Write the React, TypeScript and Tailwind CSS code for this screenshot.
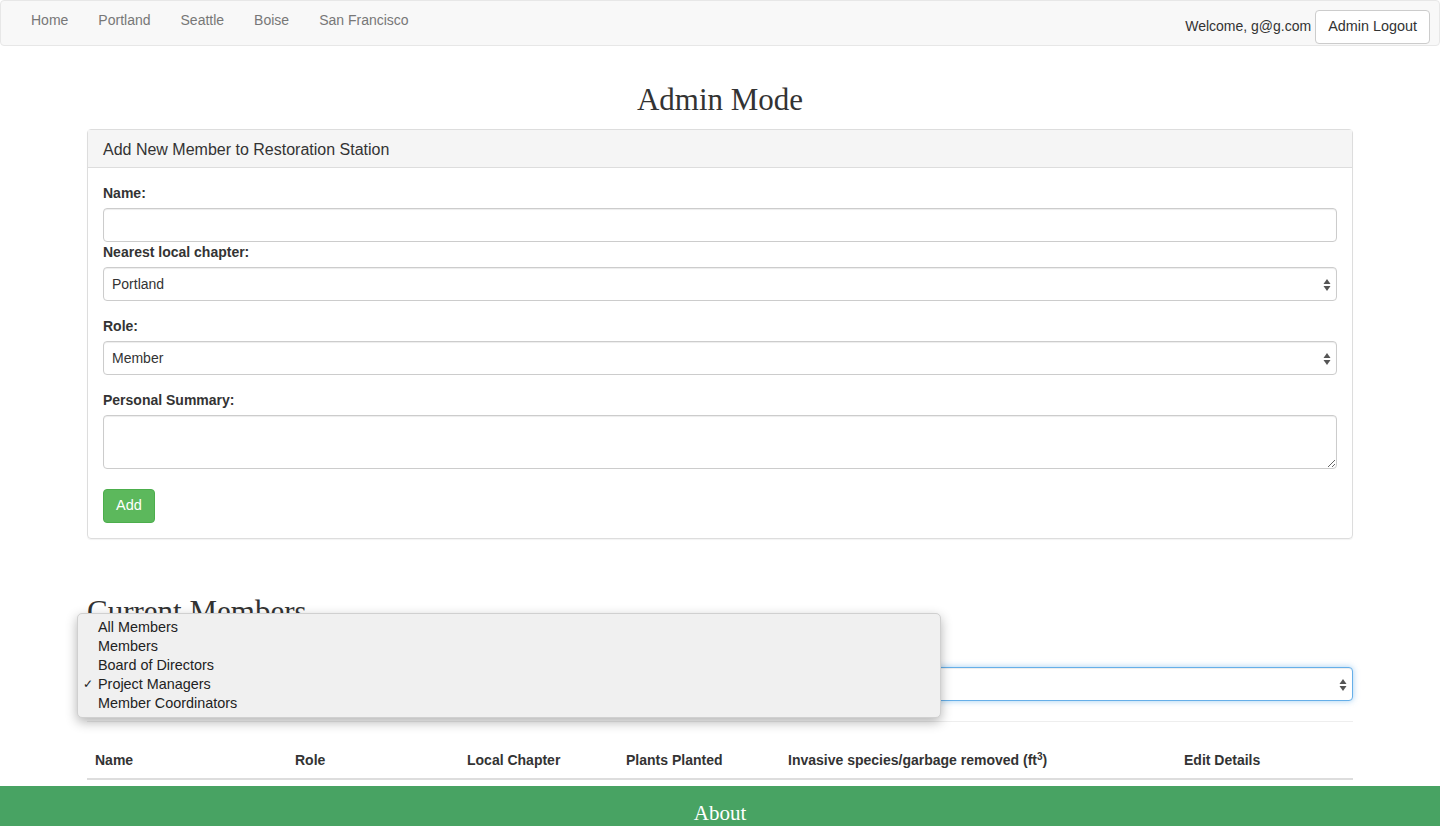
import React from "react";

const sans = "font-['Liberation_Sans','Helvetica_Neue',Arial,sans-serif]";
const serif = "font-['Liberation_Serif','DejaVu_Serif',serif]";

function SelectArrows({ className = "" }: { className?: string }) {
  return (
    <svg className={className} width="8" height="14" viewBox="0 0 8 14" fill="#555">
      <path d="M4 1 L7.5 6 L0.5 6 Z" />
      <path d="M0.5 8 L7.5 8 L4 13 Z" />
    </svg>
  );
}

function FakeSelect({ value, focused = false }: { value: string; focused?: boolean }) {
  return (
    <div
      className={`relative flex h-[34px] items-center rounded-[4px] border bg-white pl-[8px] text-[14px] text-[#333] ${
        focused
          ? "border-[#66afe9] shadow-[inset_0_1px_1px_rgba(0,0,0,0.075),0_0_6px_rgba(102,175,233,0.6)]"
          : "border-[#ccc] shadow-[inset_0_1px_1px_rgba(0,0,0,0.075)]"
      }`}
    >
      <span>{value}</span>
      <SelectArrows className="absolute right-[5px] top-[10px]" />
    </div>
  );
}

const navLinks = ["Home", "Portland", "Seattle", "Boise", "San Francisco"];
const roleOptions = ["All Members", "Members", "Board of Directors", "Project Managers", "Member Coordinators"];

export default function App() {
  return (
    <div className={`min-h-[826px] overflow-hidden bg-white ${sans} text-[14px] text-[#333]`}>
      {/* Navbar */}
      <nav className="flex h-[46px] items-start justify-between rounded-[4px] border border-[#e7e7e7] bg-[#f8f8f8] px-[15px]">
        <ul className="flex">
          {navLinks.map((link) => (
            <li key={link} className="px-[15px] pt-[9px] leading-[20px] text-[#777]">
              {link}
            </li>
          ))}
        </ul>
        <div className="-mr-[6px] flex items-start gap-[4px]">
          <span className="pt-[15px] leading-[20px] text-[#333]">Welcome, g@g.com</span>
          <button className="mt-[9px] h-[34px] rounded-[4px] border border-[#ccc] bg-white px-[12px] text-[14.4px] text-[#333]">
            Admin Logout
          </button>
        </div>
      </nav>

      <main className="mx-[87px]">
        <h1 className={`${serif} mt-[37px] mb-[12px] text-center text-[31px] leading-[34px] font-normal text-[#333]`}>
          Admin Mode
        </h1>

        {/* Add member panel */}
        <section className="rounded-[4px] border border-[#ddd] shadow-[0_1px_1px_rgba(0,0,0,0.05)]">
          <div className="h-[38px] border-b border-[#ddd] bg-[#f5f5f5] px-[15px] pt-[11px] text-[16px] leading-[18px] text-[#333]">
            Add New Member to Restoration Station
          </div>
          <div className="px-[15px] pt-[15px] pb-[15px]">
            <label className="mb-[5px] block font-bold leading-[20px]">Name:</label>
            <input className="block h-[34px] w-full rounded-[4px] border border-[#ccc] px-[12px] shadow-[inset_0_1px_1px_rgba(0,0,0,0.075)] outline-none" />

            <label className="mb-[5px] block font-bold leading-[20px]">Nearest local chapter:</label>
            <FakeSelect value="Portland" />

            <label className="mt-[15px] mb-[5px] block font-bold leading-[20px]">Role:</label>
            <FakeSelect value="Member" />

            <label className="mt-[15px] mb-[5px] block font-bold leading-[20px]">Personal Summary:</label>
            <textarea className="block h-[54px] w-full rounded-[4px] border border-[#ccc] px-[12px] shadow-[inset_0_1px_1px_rgba(0,0,0,0.075)] outline-none" />

            <button className="mt-[20px] h-[34px] rounded-[4px] border border-[#4cae4c] bg-[#5cb85c] px-[12px] text-[14.5px] text-white">
              Add
            </button>
          </div>
        </section>

        {/* Current members */}
        <h2 className={`${serif} mt-[56px] text-[31px] leading-[34px] font-normal text-[#333]`}>Current Members</h2>

        <div className="relative mt-[38px]">
          <FakeSelect value="" focused />
          <ul className="absolute -top-[54px] -left-[10px] z-10 w-[864px] rounded-[5px] border border-[#d0d0d0] bg-[#f0f0f0] py-[4px] text-[14.4px] leading-[19px] text-[#222] shadow-[0_4px_12px_rgba(0,0,0,0.3)]">
            {roleOptions.map((opt) => (
              <li key={opt} className="relative pl-[20px]">
                {opt === "Project Managers" && <span className="absolute left-[5px] text-[12px]">✓</span>}
                {opt}
              </li>
            ))}
          </ul>
        </div>

        <hr className="mt-[20px] mb-[20px] border-t border-[#eee]" />

        <table className="w-full border-collapse">
          <thead>
            <tr className="border-b-2 border-[#ddd] text-left font-bold">
              <th className="w-[200px] p-[8px] leading-[20px]">Name</th>
              <th className="w-[172px] p-[8px] leading-[20px]">Role</th>
              <th className="w-[159px] p-[8px] leading-[20px]">Local Chapter</th>
              <th className="w-[162px] p-[8px] leading-[20px]">Plants Planted</th>
              <th className="w-[396px] p-[8px] leading-[20px]">
                Invasive species/garbage removed (ft<sup className="text-[10px]">3</sup>)
              </th>
              <th className="p-[8px] leading-[20px]">Edit Details</th>
            </tr>
          </thead>
        </table>
      </main>

      {/* Footer */}
      <footer className="mt-[6px] h-[60px] bg-[#48a363] pt-[15px] text-center">
        <span className={`${serif} text-[21px] leading-[24px] text-white`}>About</span>
      </footer>
    </div>
  );
}
